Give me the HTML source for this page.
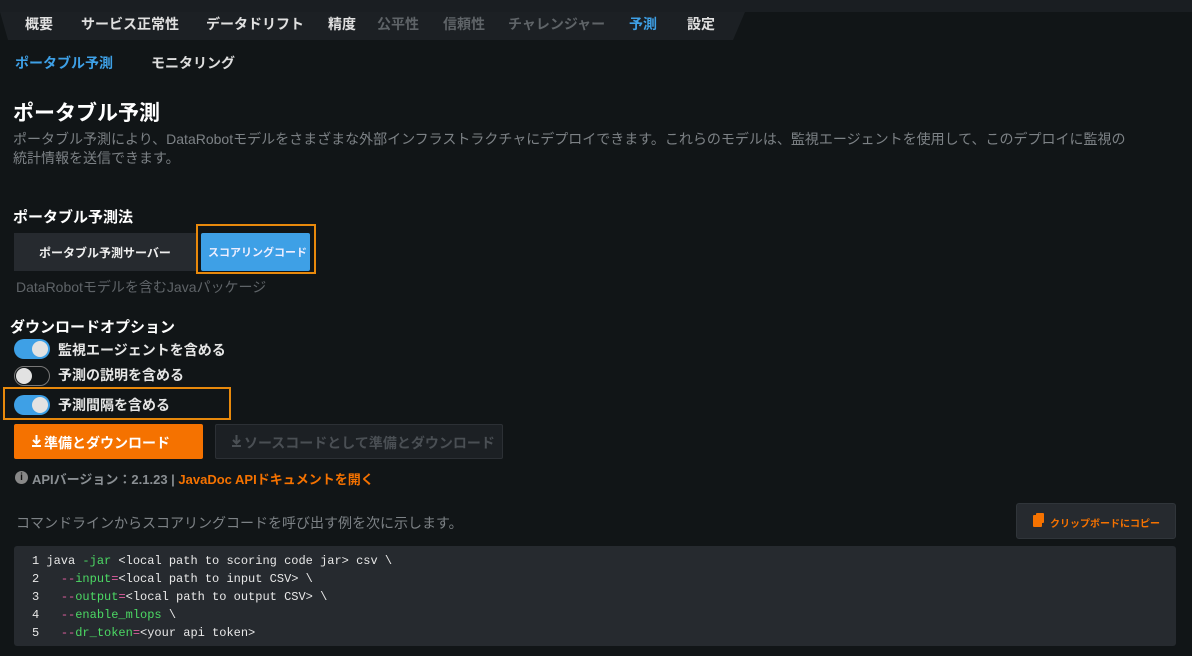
<!DOCTYPE html>
<html><head><meta charset="utf-8"><style>
*{margin:0;padding:0;box-sizing:border-box}
body{width:1192px;height:656px;background:#111517;font-family:"Liberation Sans","Noto Sans CJK JP",sans-serif;color:#e6e6e6;position:relative;overflow:hidden}
.abs{position:absolute;white-space:nowrap}
.tab{position:absolute;top:14px;font-size:14px;font-weight:bold;color:#e0e0e0}
.dis{color:#5f6468}
.blue{color:#3ea0e6}
.tgl{position:absolute;width:36px;height:20px;border-radius:10px;background:#3ea0e6}
.tgl::after{content:"";position:absolute;top:2px;right:2px;width:16px;height:16px;border-radius:50%;background:#e2e2e2}
.off{background:#111517;border:1px solid #777}
.off::after{left:1px;right:auto;top:1px}
.code{position:absolute;left:14px;top:546px;width:1162px;height:100px;background:#262a2f;border-radius:3px;font-family:"Liberation Mono",monospace;font-size:12px;color:#e8e8e8}
.code div{position:absolute;left:18px;white-space:pre}
.g{color:#4cd964}.p{color:#e05fa0}
</style></head><body>
<svg width="1192" height="40" style="position:absolute;left:0;top:0"><rect width="1192" height="12" fill="#1a1e22"/><polygon points="0,12 745,12 733,40 8,40" fill="#1c2024"/></svg>
<div class="abs tab" style="left:25px">概要</div>
<div class="abs tab" style="left:81px">サービス正常性</div>
<div class="abs tab" style="left:206px">データドリフト</div>
<div class="abs tab" style="left:328px">精度</div>
<div class="abs tab dis" style="left:377px">公平性</div>
<div class="abs tab dis" style="left:443px">信頼性</div>
<div class="abs tab dis" style="left:508px">チャレンジャー</div>
<div class="abs tab blue" style="left:629px">予測</div>
<div class="abs tab" style="left:687px">設定</div>

<div class="abs blue" style="left:15px;top:53px;font-size:14px;font-weight:bold">ポータブル予測</div>
<div class="abs" style="left:151px;top:53px;font-size:14px;font-weight:bold;color:#ddd">モニタリング</div>

<div class="abs" style="left:13px;top:97px;font-size:21px;font-weight:bold;color:#fff">ポータブル予測</div>
<div class="abs" style="left:13px;top:130px;font-size:14px;color:#7d8286;line-height:19px">ポータブル予測により、DataRobotモデルをさまざまな外部インフラストラクチャにデプロイできます。これらのモデルは、監視エージェントを使用して、このデプロイに監視の<br>統計情報を送信できます。</div>

<div class="abs" style="left:13px;top:206px;font-size:15px;font-weight:bold;color:#fff">ポータブル予測法</div>
<div class="abs" style="left:14px;top:233px;width:182px;height:38px;background:#262a2f"></div>
<div class="abs" style="left:39px;top:244px;font-size:12px;font-weight:bold;color:#eee">ポータブル予測サーバー</div>
<div class="abs" style="left:196px;top:224px;width:120px;height:50px;border:2px solid #e8890c"></div>
<div class="abs" style="left:201px;top:233px;width:109px;height:38px;background:#3ea0e6;border-radius:2px"></div>
<div class="abs" style="left:208px;top:244px;font-size:11px;font-weight:bold;color:#eef">スコアリングコード</div>
<div class="abs" style="left:16px;top:277px;font-size:14px;color:#5f6468">DataRobotモデルを含むJavaパッケージ</div>

<div class="abs" style="left:10px;top:316px;font-size:15px;font-weight:bold;color:#fff">ダウンロードオプション</div>
<div class="tgl" style="left:14px;top:339px"></div>
<div class="abs" style="left:58px;top:340px;font-size:14px;font-weight:bold">監視エージェントを含める</div>
<div class="tgl off" style="left:14px;top:366px"></div>
<div class="abs" style="left:58px;top:365px;font-size:14px;font-weight:bold">予測の説明を含める</div>
<div class="abs" style="left:3px;top:387px;width:228px;height:33px;border:2px solid #e8890c"></div>
<div class="tgl" style="left:14px;top:395px"></div>
<div class="abs" style="left:58px;top:395px;font-size:14px;font-weight:bold">予測間隔を含める</div>

<div class="abs" style="left:14px;top:424px;width:189px;height:35px;background:#f57200;border-radius:2px"></div>
<svg class="abs" style="left:31px;top:434px" width="11" height="13" viewBox="0 0 11 13"><path d="M5.5 1V9M2 6l3.5 3.5L9 6M1 12h9" stroke="#fff" stroke-width="2" fill="none"/></svg>
<div class="abs" style="left:44px;top:433px;font-size:14px;font-weight:bold;color:#fff">準備とダウンロード</div>
<div class="abs" style="left:215px;top:424px;width:288px;height:35px;background:#1c2024;border:1px solid #2c3035;border-radius:2px"></div>
<svg class="abs" style="left:231px;top:434px" width="11" height="13" viewBox="0 0 11 13"><path d="M5.5 1V9M2 6l3.5 3.5L9 6M1 12h9" stroke="#4a4f54" stroke-width="2" fill="none"/></svg>
<div class="abs" style="left:244px;top:433px;font-size:14px;font-weight:bold;color:#4a4f54">ソースコードとして準備とダウンロード</div>

<div class="abs" style="left:15px;top:471px;width:13px;height:13px;border-radius:50%;background:#888;color:#111;font-size:10px;font-weight:bold;text-align:center;line-height:13px">i</div>
<div class="abs" style="left:32px;top:469px;font-size:13px;font-weight:bold;color:#8a8f93">APIバージョン：2.1.23 | <span style="color:#f57200">JavaDoc APIドキュメントを開く</span></div>

<div class="abs" style="left:16px;top:513px;font-size:14px;color:#7d8286">コマンドラインからスコアリングコードを呼び出す例を次に示します。</div>
<div class="abs" style="left:1016px;top:503px;width:160px;height:36px;background:#262a2f;border:1px solid #30353a;border-radius:3px"></div>
<div class="abs" style="left:1033px;top:515px;width:9px;height:12px;background:#f57200;border-radius:1px"></div>
<div class="abs" style="left:1036px;top:513px;width:8px;height:10px;background:#f57200;border-radius:1px"></div>
<div class="abs" style="left:1050px;top:515px;font-size:10px;font-weight:bold;color:#f57200">クリップボードにコピー</div>

<div class="code">
<div style="top:8px">1 java <span class="g">-jar</span> &lt;local path to scoring code jar&gt; csv \</div>
<div style="top:26px">2   <span class="p">--</span><span class="g">input</span><span class="p">=</span>&lt;local path to input CSV&gt; \</div>
<div style="top:44px">3   <span class="p">--</span><span class="g">output</span><span class="p">=</span>&lt;local path to output CSV&gt; \</div>
<div style="top:62px">4   <span class="p">--</span><span class="g">enable_mlops</span> \</div>
<div style="top:80px">5   <span class="p">--</span><span class="g">dr_token</span><span class="p">=</span>&lt;your api token&gt;</div>
</div>
</body></html>
